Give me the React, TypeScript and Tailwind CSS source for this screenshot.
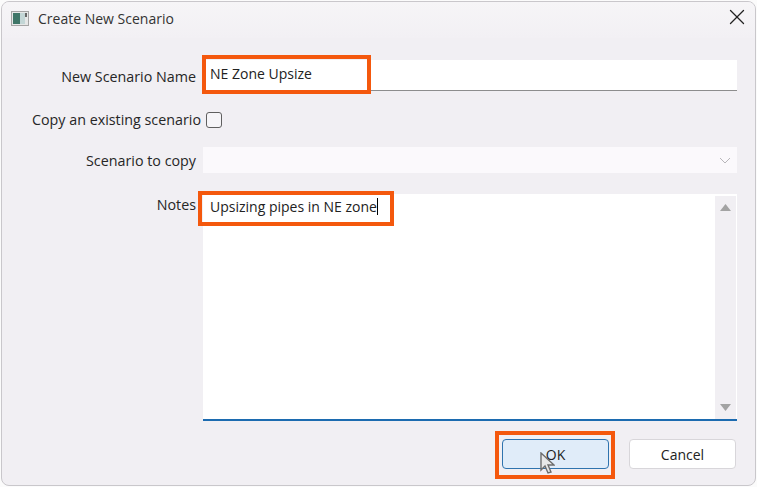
import React from 'react';
import { X } from 'lucide-react';

function Label({ children, className = '' }: { children: React.ReactNode; className?: string }) {
  return <div className={`shrink-0 text-right text-[14.3px] leading-[18px] text-[#262626] ${className}`}>{children}</div>;
}

export default function App() {
  return (
    <div className="w-[757px] h-[487px] bg-[#fbfbfb] overflow-hidden pl-px pt-px font-['Open_Sans','Liberation_Sans',sans-serif]">
      <div className="w-[755px] h-[485px] bg-[#f1eff3] border border-[#c9c7cb] rounded-lg overflow-hidden flex flex-col">
        {/* Title bar */}
        <div className="h-[36px] shrink-0 flex items-center pl-[9px] pr-[5px] bg-gradient-to-b from-[#f6f5f7] to-[#f2f0f4]">
          <svg width="18" height="15" viewBox="0 0 18 15" className="shrink-0 mb-[3px]">
            <rect x="0.5" y="0.5" width="17" height="14" fill="#e6e7e7" stroke="#a5a5a5" />
            <rect x="2" y="2" width="7" height="11" fill="#3f7668" />
            <rect x="9" y="2" width="5" height="11" fill="#c3d6d6" />
            <rect x="14" y="2" width="2" height="4" fill="#666" />
          </svg>
          <div className="ml-[9px] mb-[3px] text-[14px] text-[#333]">Create New Scenario</div>
          <X size={26} strokeWidth={1.2} className="ml-auto mb-[6px] text-[#222]" />
        </div>

        <div className="flex-1 flex flex-col pr-[18px]">
          {/* Name */}
          <div className="flex mt-[22px] h-[31px]">
            <Label className="w-[194px] pt-[8px]">New Scenario Name</Label>
            <div className="ml-[7px] flex-1 relative bg-white border-b border-[#8d8d8d] pl-[7px] text-[14px] leading-[28px] text-[#222]">
              NE Zone Upsize
              <div className="absolute left-[-1px] top-[-5px] w-[169px] h-[39px] border-[4px] border-[#f4580d]" />
            </div>
          </div>

          {/* Copy */}
          <div className="flex items-center mt-[13px] h-[32px]">
            <Label className="w-[199px]">Copy an existing scenario</Label>
            <div className="ml-[5px] w-[16px] h-[16px] rounded-[3px] border border-[#5f5f5f] bg-white/40" />
          </div>

          {/* Scenario to copy */}
          <div className="flex mt-[11px] h-[26px]">
            <Label className="w-[194px] pt-[5px]">Scenario to copy</Label>
            <div className="ml-[7px] flex-1 bg-[#fbf9fc] flex items-center justify-end pr-[6px]">
              <svg width="12" height="7" viewBox="0 0 12 7"><path d="M1 1l5 5 5-5" fill="none" stroke="#b8b6ba" strokeWidth="1" /></svg>
            </div>
          </div>

          {/* Notes */}
          <div className="flex mt-[21px] h-[227px]">
            <Label className="w-[194px] pt-[2px]">Notes</Label>
            <div className="ml-[7px] flex-1 relative bg-white border-b-2 border-[#1c6bb0] flex">
              <div className="flex-1 pl-[7px] pt-[3px] text-[14px] leading-[20px] text-[#222]">
                Upsizing pipes in NE zone<span className="inline-block w-px h-[17px] bg-black align-[-3px]" />
              </div>
              <div className="w-[21px] mr-px mt-[2px] bg-[#f1eff3] flex flex-col items-center justify-between pt-[8px] pb-[8px]">
                <svg width="11" height="7" viewBox="0 0 11 7"><path d="M5.500 0L11 7H0z" fill="#a3a3a3" /></svg>
                <svg width="11" height="7" viewBox="0 0 11 7"><path d="M0 0h11L5.500 7z" fill="#a3a3a3" /></svg>
              </div>
              <div className="absolute left-[-5px] top-[-3px] w-[196px] h-[35px] border-[4px] border-[#f4580d]" />
            </div>
          </div>

          {/* Buttons */}
          <div className="flex justify-end gap-[20px] mt-[18px] mr-px">
            <div className="relative w-[107px] h-[30px] rounded-[4px] bg-[#e0ecf9] border border-[#2f73ae] flex items-center justify-center text-[14px] text-[#222]">
              OK
              <div className="absolute left-[-8px] top-[-9px] w-[120px] h-[48px] border-[4px] border-[#f4580d]" />
              <svg width="16" height="24" viewBox="0 0 16 24" className="absolute left-[36px] top-[12px]">
                <path d="M2 1v17l4-4 3 7 3-1-3-7h6z" fill="#e8e8e8" stroke="#6d6d6d" strokeWidth="1.4" />
              </svg>
            </div>
            <div className="w-[107px] h-[30px] rounded-[4px] bg-white border border-[#d8d6da] flex items-center justify-center text-[14px] text-[#222]">
              Cancel
            </div>
          </div>
        </div>
      </div>
    </div>
  );
}
